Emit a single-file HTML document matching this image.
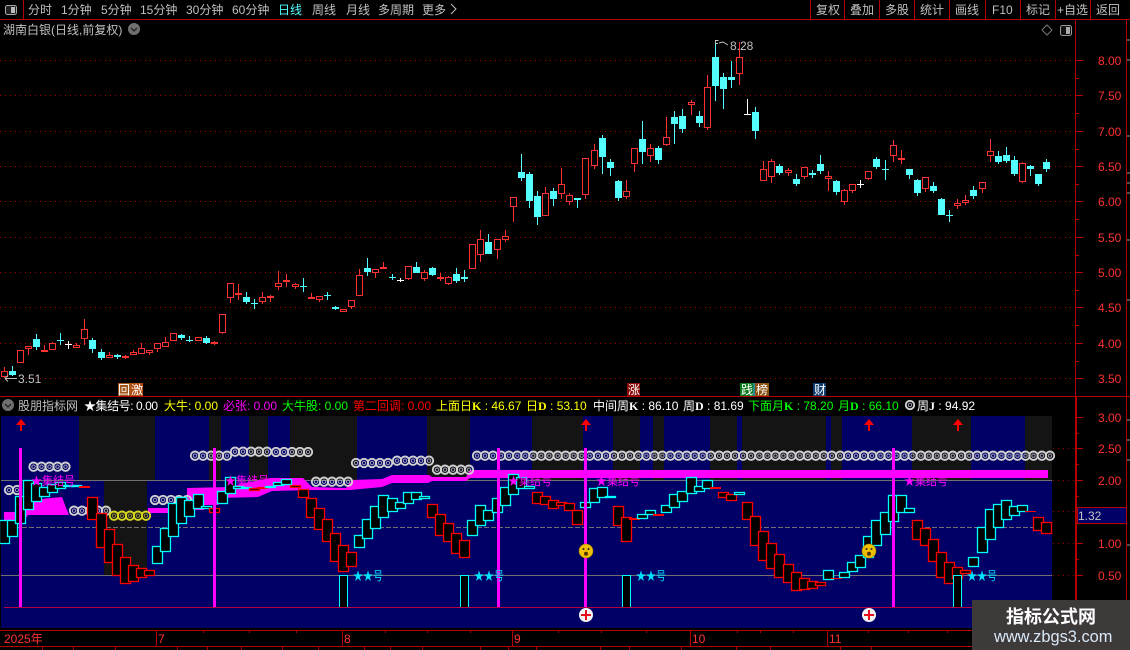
<!DOCTYPE html>
<html><head><meta charset="utf-8"><title>湖南白银</title>
<style>
html,body{margin:0;padding:0;background:#000;width:1130px;height:650px;overflow:hidden}
svg{display:block;font-family:"Liberation Sans","Noto Sans CJK SC",sans-serif;font-size:12px}
.g{fill:#c0c0c0}
.a{fill:#ff3232}
rect.c,rect.r{width:10px;fill:#000;stroke-width:1.3}
rect.c{stroke:#00ffff}
rect.r{stroke:#ff0000}
rect.f{width:11px;fill:#ff0000}
.k{font-family:"Liberation Serif",serif;font-weight:bold}
.m{fill:#ff00ff}
.s{fill:#00e5ff}
</style></head><body>
<svg width="1130" height="650" viewBox="0 0 1130 650" xmlns="http://www.w3.org/2000/svg">
<defs>
<g id="o"><circle r="4.2" fill="none" stroke="#d0d0d0" stroke-width="1.9"/><circle r="1.7" fill="none" stroke="#a0a0b8" stroke-width="1"/></g>
<g id="f"><use href="#o" x="0"/><use href="#o" x="8"/><use href="#o" x="16"/><use href="#o" x="24"/><use href="#o" x="32"/></g>
<g id="y"><circle r="4.2" fill="none" stroke="#d8d820" stroke-width="1.9"/><circle r="1.7" fill="none" stroke="#909040" stroke-width="1"/></g>
</defs>

<!-- frame lines -->
<path d="M0 19.5H1130M0 396.5H1130M0 630.5H972M0 646.5H972M23.5 0V19M1075.5 20V600M1126.5 20V600" stroke="#b40000" fill="none"/>
<path d="M810.5 0V19M844.5 0V19M879.5 0V19M914.5 0V19M949.5 0V19M985.5 0V19M1020.5 0V19M1055.5 0V19M1090.5 0V19" stroke="#b40000"/>
<path d="M1076.5 396V600" stroke="#b40000"/>

<!-- toolbar -->
<rect x="5.5" y="5.5" width="11" height="9" rx="2" fill="#222" stroke="#aaa"/><rect x="11" y="7" width="4" height="6" fill="#bbb"/>
<g class="g">
<text x="28" y="14">分时</text><text x="61" y="14">1分钟</text><text x="101" y="14">5分钟</text><text x="140" y="14">15分钟</text><text x="186" y="14">30分钟</text><text x="232" y="14">60分钟</text>
<text x="278" y="14" style="fill:#54ffff">日线</text><text x="312" y="14">周线</text><text x="346" y="14">月线</text><text x="378" y="14">多周期</text><text x="422" y="14">更多</text>
<text x="816" y="14">复权</text><text x="850" y="14">叠加</text><text x="885" y="14">多股</text><text x="920" y="14">统计</text><text x="955" y="14">画线</text><text x="992" y="14">F10</text><text x="1026" y="14">标记</text><text x="1057" y="14">+自选</text><text x="1096" y="14">返回</text>
<text x="3" y="34">湖南白银(日线,前复权)</text>
</g>
<path d="M451 4l5 5-5 5" stroke="#c0c0c0" fill="none"/>
<circle cx="134" cy="29" r="6" fill="#707070"/><path d="M131 28l3 3 3-3" stroke="#222" stroke-width="1.3" fill="none"/>
<path d="M1047 25l5 5-5 5-5-5z" stroke="#777" fill="none"/>
<rect x="1060.5" y="25.5" width="11" height="10" rx="2" fill="#111" stroke="#999"/><rect x="1066" y="27" width="4" height="7" fill="#aaa"/>

<!-- price grid -->
<path d="M0 60.5H1075M0 95.5H1075M0 131.5H1075M0 166.5H1075M0 201.5H1075M0 237.5H1075M0 272.5H1075M0 307.5H1075M0 343.5H1075M0 378.5H1075" stroke="#a00000" stroke-dasharray="1 4" fill="none"/>
<path d="M1075 60.5h8M1075 95.5h8M1075 131.5h8M1075 166.5h8M1075 201.5h8M1075 237.5h8M1075 272.5h8M1075 307.5h8M1075 343.5h8M1075 378.5h8M1075 78.5h4M1075 113.5h4M1075 149.5h4M1075 184.5h4M1075 219.5h4M1075 255.5h4M1075 290.5h4M1075 325.5h4M1075 361.5h4" stroke="#b40000"/>
<g class="a">
<text x="1098" y="65">8.00</text><text x="1098" y="100">7.50</text><text x="1098" y="136">7.00</text><text x="1098" y="171">6.50</text><text x="1098" y="206">6.00</text><text x="1098" y="242">5.50</text><text x="1098" y="277">5.00</text><text x="1098" y="312">4.50</text><text x="1098" y="348">4.00</text><text x="1098" y="383">3.50</text>
</g>

<!-- red wicks -->
<path stroke="#ff3232" fill="none" d="M4.5 367V378M28.5 349V355M44.5 345V351M52.5 342V350M76.5 343V348M84.5 319V345M109.5 352V358M125.5 355V359M133.5 350V355M141.5 343V354M149.5 353V355M157.5 349V352M165.5 337V347M214.5 341V345M222.5 333V334M230.5 298V303M238.5 284V300M262.5 292V304M270.5 295V302M278.5 271V290M286.5 274V287M295.5 283V289M311.5 293V299M319.5 300V302M351.5 307V309M359.5 269V275M375.5 273V278M383.5 262V269M408.5 279V280M424.5 270V281M440.5 273V281M448.5 276V285M480.5 230V262M497.5 250V259M505.5 230V242M513.5 207V222M545.5 187V193M561.5 168V199M569.5 193V205M585.5 195V199M594.5 144V169M626.5 180V199M634.5 164V172M650.5 144V162M666.5 117V146M691.5 100V115M707.5 75V130M739.5 42V85M763.5 161V169M771.5 159V183M788.5 168V176M804.5 177V179M828.5 171V191M844.5 189V205M852.5 191V193M868.5 179V180M893.5 140V162M901.5 150V164M925.5 189V192M957.5 199V209M965.5 195V205M982.5 189V193M990.5 139V162M1022.5 162V183"/>
<!-- red bodies -->
<path stroke="#ff3232" fill="#000" d="M1.5 371.5h6V376.5h-6zM17.5 350.5h6V362.5h-6zM25.5 346.5h6V348.5h-6zM49.5 343.5h6V349.5h-6zM73.5 345.5h6V347.5h-6zM81.5 329.5h6V338.5h-6zM106.5 355.5h6V357.5h-6zM130.5 352.5h6V354.5h-6zM138.5 348.5h6V353.5h-6zM146.5 350.5h6V352.5h-6zM154.5 343.5h6V348.5h-6zM162.5 342.5h6V346.5h-6zM170.5 333.5h6V340.5h-6zM195.5 337.5h6V340.5h-6zM219.5 314.5h6V332.5h-6zM227.5 283.5h6V297.5h-6zM259.5 297.5h6V301.5h-6zM275.5 283.5h6V286.5h-6zM292.5 284.5h6V286.5h-6zM316.5 296.5h6V299.5h-6zM340.5 309.5h6V311.5h-6zM348.5 300.5h6V306.5h-6zM356.5 275.5h6V295.5h-6zM372.5 269.5h6V272.5h-6zM405.5 266.5h6V278.5h-6zM421.5 272.5h6V278.5h-6zM445.5 277.5h6V283.5h-6zM469.5 244.5h6V268.5h-6zM477.5 239.5h6V254.5h-6zM494.5 239.5h6V249.5h-6zM502.5 236.5h6V239.5h-6zM510.5 197.5h6V206.5h-6zM542.5 193.5h6V215.5h-6zM558.5 184.5h6V193.5h-6zM566.5 195.5h6V201.5h-6zM582.5 158.5h6V194.5h-6zM591.5 150.5h6V165.5h-6zM623.5 191.5h6V196.5h-6zM631.5 148.5h6V163.5h-6zM647.5 148.5h6V155.5h-6zM663.5 137.5h6V144.5h-6zM688.5 102.5h6V104.5h-6zM704.5 87.5h6V127.5h-6zM736.5 57.5h6V73.5h-6zM760.5 169.5h6V180.5h-6zM768.5 161.5h6V176.5h-6zM785.5 170.5h6V172.5h-6zM801.5 167.5h6V176.5h-6zM825.5 176.5h6V178.5h-6zM841.5 190.5h6V201.5h-6zM849.5 184.5h6V190.5h-6zM865.5 171.5h6V178.5h-6zM890.5 145.5h6V155.5h-6zM954.5 203.5h6V205.5h-6zM962.5 200.5h6V202.5h-6zM922.5 177.5h6V188.5h-6zM979.5 182.5h6V188.5h-6zM987.5 151.5h6V155.5h-6zM1019.5 163.5h6V181.5h-6z"/>
<path fill="#ff3232" d="M41 350h7v2h-7zM122 356h7v2h-7zM211 342h7v2h-7zM235 293h7v2h-7zM267 296h7v2h-7zM283 280h7v2h-7zM308 297h7v2h-7zM380 267h7v2h-7zM437 277h7v2h-7zM898 158h7v2h-7z"/>

<!-- cyan wicks -->
<path stroke="#54ffff" fill="none" d="M12.5 366V376M36.5 334V350M60.5 333V345M92.5 338V353M101.5 349V360M117.5 354V359M181.5 334V340M189.5 336V342M206.5 336V344M246.5 292V304M254.5 299V309M303.5 278V292M327.5 292V300M335.5 306V310M367.5 258V276M392.5 274V280M416.5 262V273M432.5 267V276M456.5 268V283M464.5 270V282M488.5 234V254M521.5 154V181M529.5 172V208M537.5 191V225M553.5 188V206M577.5 198V208M602.5 135V174M610.5 159V176M618.5 180V201M642.5 121V164M658.5 146V164M674.5 111V144M682.5 109V133M699.5 111V127M715.5 40V101M723.5 73V109M731.5 61V88M755.5 107V139M779.5 164V175M796.5 174V186M812.5 170V178M820.5 155V174M836.5 180V195M876.5 157V169M885.5 160V180M909.5 169V179M917.5 179V196M933.5 182V193M941.5 198V215M949.5 210V222M973.5 186V199M998.5 151V164M1006.5 147V163M1014.5 156V176M1030.5 165V176M1038.5 174V186M1046.5 159V172"/>
<!-- cyan bodies -->
<path fill="#54ffff" d="M9 371h7v4h-7zM33 339h7v8h-7zM57 340h7v1h-7zM89 340h7v9h-7zM98 352h7v6h-7zM114 355h7v2h-7zM178 335h7v3h-7zM186 340h7v1h-7zM203 338h7v5h-7zM243 297h7v5h-7zM251 303h7v1h-7zM300 286h7v1h-7zM324 295h7v1h-7zM332 307h7v2h-7zM364 268h7v4h-7zM389 277h7v1h-7zM413 267h7v6h-7zM429 268h7v7h-7zM453 274h7v7h-7zM461 277h7v2h-7zM485 242h7v12h-7zM518 172h7v6h-7zM526 174h7v27h-7zM534 196h7v21h-7zM550 191h7v8h-7zM574 198h7v2h-7zM599 138h7v19h-7zM607 162h7v6h-7zM615 181h7v17h-7zM639 139h7v13h-7zM655 148h7v12h-7zM671 117h7v7h-7zM679 116h7v13h-7zM696 116h7v7h-7zM712 57h7v29h-7zM720 77h7v12h-7zM728 77h7v3h-7zM752 112h7v19h-7zM776 166h7v7h-7zM793 179h7v5h-7zM809 173h7v2h-7zM817 164h7v7h-7zM833 181h7v11h-7zM873 159h7v8h-7zM882 169h7v1h-7zM906 169h7v6h-7zM914 180h7v13h-7zM930 186h7v5h-7zM938 199h7v16h-7zM946 215h7v1h-7zM970 190h7v6h-7zM995 156h7v6h-7zM1003 155h7v6h-7zM1011 160h7v14h-7zM1027 166h7v3h-7zM1035 174h7v10h-7zM1043 162h7v7h-7z"/>
<!-- white dojis -->
<path stroke="#fff" fill="none" d="M68.5 341V349M65 344.5h7M400.5 278V282M397 280.5h7M747.5 99V115M744 114.5h7M860.5 180V188M857 184.5h7"/>

<!-- high / low markers -->
<path d="M715.5 40V44M715.5 40.5h3M716 43.5h2M719 43l4-1 5 3" stroke="#c0c0c0" fill="none"/>
<text x="730" y="50" class="g">8.28</text>
<path d="M5 378.5H17M5 378.5l3-3M5 378.5l3 3" stroke="#c0c0c0" fill="none"/>
<text x="18" y="383" class="g">3.51</text>

<!-- signal badges -->
<rect x="118" y="383" width="13" height="13" fill="#a0561c"/><rect x="131" y="383" width="12" height="13" fill="#b04a10"/>
<rect x="627" y="383" width="13" height="13" fill="#8a0a0a"/>
<rect x="740" y="383" width="13" height="13" fill="#0e7a1e"/><rect x="753" y="383" width="3" height="13" fill="#2a8a9a"/><rect x="755" y="383" width="14" height="13" fill="#8a5010"/>
<rect x="813" y="383" width="13" height="13" fill="#0f3c6e"/>
<g fill="#fff"><text x="118" y="394">回</text><text x="131" y="394">激</text><text x="628" y="394">涨</text><text x="741" y="394">践</text><text x="756" y="394">榜</text><text x="814" y="394">财</text></g>

<!-- legend -->
<circle cx="8" cy="405" r="6" fill="#707070"/><path d="M5 404l3 3 3-3" stroke="#222" stroke-width="1.3" fill="none"/>
<text x="18" y="410" class="g">股朋指标网</text>
<text x="84" y="410" fill="#fff" textLength="74">★集结号: 0.00</text>
<text x="164" y="410" fill="#ffff00">大牛: 0.00</text>
<text x="223" y="410" fill="#ff00ff">必张: 0.00</text>
<text x="282" y="410" fill="#00ff00">大牛股: 0.00</text>
<text x="353" y="410" fill="#ff0000">第二回调: 0.00</text>
<text x="436" y="410" fill="#ffff00">上面日<tspan class="k">K</tspan> : 46.67</text>
<text x="526" y="410" fill="#ffff00">日<tspan class="k">D</tspan> : 53.10</text>
<text x="593" y="410" fill="#fff">中间周<tspan class="k">K</tspan> : 86.10</text>
<text x="683" y="410" fill="#fff">周<tspan class="k">D</tspan> : 81.69</text>
<text x="748" y="410" fill="#00ff00">下面月<tspan class="k">K</tspan> : 78.20</text>
<text x="838" y="410" fill="#00ff00">月<tspan class="k">D</tspan> : 66.10</text>
<use href="#o" x="910" y="405"/>
<text x="917" y="410" fill="#fff">周<tspan class="k">J</tspan> : 94.92</text>

<!-- lower panel background -->
<rect x="1" y="416" width="1051" height="212" fill="#000066"/>
<path fill="#141414" d="M79 416h76v64h-76zM209 416h12v64h-12zM249 416h19v64h-19zM290 416h67v64h-67zM427 416h43v64h-43zM532 416h51v64h-51zM613 416h27v64h-27zM653 416h11v64h-11zM710 416h27v64h-27zM742 416h84v64h-84zM831 416h11v64h-11zM912 416h59v64h-59zM1025 416h27v64h-27zM104 480h43v95h-43z"/>
<path d="M1 480.5H1052M1 575.5H1052" stroke="#707070"/>
<path d="M1 527.5H1052" stroke="#707070" stroke-dasharray="5 2"/>
<path d="M4 607.5H1052" stroke="#b40040"/>

<!-- axis lower -->
<path d="M1053 448.5h22M1053 480.5h22M1053 511.5h22M1053 543.5h22M1053 575.5h22" stroke="#a00000" stroke-dasharray="1 4"/>
<path d="M1075 417.5h8M1075 448.5h8M1075 480.5h8M1075 543.5h8M1075 575.5h8M1075 433.5h4M1075 464.5h4M1075 496.5h4M1075 559.5h4" stroke="#b40000"/>
<g class="a"><text x="1098" y="422">3.00</text><text x="1098" y="453">2.50</text><text x="1098" y="485">2.00</text><text x="1098" y="548">1.00</text><text x="1098" y="580">0.50</text></g>
<rect x="1077.5" y="507.5" width="49" height="16" fill="#000066" stroke="#b40000"/>
<text x="1078" y="520" fill="#c8c8c8">1.32</text>
<path d="M1127 136h3M1127 173h3M1127 183h3M1127 193h3M1127 40h3M1127 60h3M1127 240h3M1127 300h3M1127 420h3M1127 440h3M1127 460h3M1127 545h3" stroke="#999"/>

<!-- magenta band -->
<path fill="#ff00ff" d="M4 512L24 512 24 502 30 500 62 497 65 505 69 515 28 515 24 521 4 521zM148 508h22v5h-22zM187 488L230 487 250 482 270 478 303 478 312 487 346 488 352 480 382 479 392 475 429 475 432 477 466 477 470 470 1048 470 1048 478 470 478 466 481 432 481 428 483 392 483 382 487 350 490 312 490 272 491 258 497 216 498 223 500 218 505 204 505 204 510 187 510z"/>

<!-- rings -->
<use href="#f" x="33.5" y="466.7"/><use href="#o" x="9" y="490"/><use href="#o" x="17" y="490"/>
<use href="#f" x="74" y="510.7"/>
<use href="#y" x="114" y="515.7"/><use href="#y" x="122" y="515.7"/><use href="#y" x="130" y="515.7"/><use href="#y" x="138" y="515.7"/><use href="#y" x="146" y="515.7"/>
<use href="#f" x="155" y="500"/><use href="#f" x="195" y="455.7"/><use href="#f" x="235" y="451.7"/><use href="#f" x="276" y="452"/><use href="#f" x="316" y="481.7"/><use href="#f" x="356" y="463"/><use href="#f" x="397" y="460.7"/><use href="#f" x="437" y="469.7"/>
<use href="#f" x="477" y="455.7"/><use href="#f" x="517.3" y="455.7"/><use href="#f" x="557.7" y="455.7"/><use href="#f" x="598" y="455.7"/><use href="#f" x="638.4" y="455.7"/><use href="#f" x="678.7" y="455.7"/><use href="#f" x="719.1" y="455.7"/><use href="#f" x="759.4" y="455.7"/><use href="#f" x="799.8" y="455.7"/><use href="#f" x="840.1" y="455.7"/><use href="#f" x="880.5" y="455.7"/><use href="#f" x="920.8" y="455.7"/><use href="#f" x="961.2" y="455.7"/><use href="#f" x="1001.5" y="455.7"/><use href="#o" x="1041.9" y="455.7"/><use href="#o" x="1050" y="455.7"/>

<!-- lower boxes -->
<rect class="c" x="-.5" y="520.5" height="23"/><rect class="c" x="7.5" y="520.5" height="16"/><rect class="c" x="15.5" y="496.5" height="27"/><rect class="c" x="23.5" y="480.5" height="29"/><rect class="c" x="31.5" y="483.5" height="18"/><rect class="c" x="39.5" y="487.5" height="9"/><rect class="c" x="47.5" y="484.5" height="8"/><rect class="c" x="55.5" y="482.5" height="6"/><rect class="c" x="63.5" y="485.5" height="1"/><rect class="c" x="71.5" y="485.5" height="1"/>
<rect class="f" x="79" y="486" height="2"/><rect class="r" x="87.5" y="497.5" height="22"/><rect class="r" x="96.5" y="513.5" height="34"/><rect class="r" x="104.5" y="529.5" height="33"/><rect class="r" x="112.5" y="544.5" height="31"/><rect class="r" x="120.5" y="557.5" height="26"/><rect class="r" x="128.5" y="565.5" height="16"/><rect class="r" x="136.5" y="568.5" height="9"/><rect class="r" x="144.5" y="570.5" height="5"/>
<rect class="c" x="152.5" y="546.5" height="17"/><rect class="c" x="160.5" y="528.5" height="23"/><rect class="c" x="168.5" y="503.5" height="33"/><rect class="c" x="176.5" y="497.5" height="26"/><rect class="c" x="184.5" y="500.5" height="16"/><rect class="c" x="193.5" y="494.5" height="14"/><rect class="c" x="201.5" y="506.5" height="2"/>
<rect class="r" x="209.5" y="508.5" height="4"/>
<rect class="c" x="217.5" y="491.5" height="12"/><rect class="c" x="225.5" y="477.5" height="16"/><rect class="c" x="233.5" y="486.5" height="2"/><rect class="c" x="241.5" y="487.5" height="1"/>
<rect class="r" x="249.5" y="488.5" height="2"/><rect class="f" x="257" y="487" height="2"/>
<rect class="c" x="265.5" y="486.5" height="1"/><rect class="c" x="273.5" y="482.5" height="3"/><rect class="c" x="281.5" y="479.5" height="5"/>
<rect class="r" x="290.5" y="485.5" height="2"/><rect class="r" x="298.5" y="489.5" height="8"/><rect class="r" x="306.5" y="498.5" height="19"/><rect class="r" x="314.5" y="508.5" height="21"/><rect class="r" x="322.5" y="519.5" height="22"/><rect class="r" x="330.5" y="533.5" height="28"/><rect class="r" x="338.5" y="545.5" height="26"/><rect class="r" x="346.5" y="552.5" height="14"/>
<rect class="c" x="354.5" y="535.5" height="12"/><rect class="c" x="362.5" y="519.5" height="19"/><rect class="c" x="370.5" y="506.5" height="22"/><rect class="c" x="378.5" y="495.5" height="22"/><rect class="c" x="387.5" y="498.5" height="13"/><rect class="c" x="395.5" y="502.5" height="6"/><rect class="c" x="403.5" y="492.5" height="11"/><rect class="c" x="411.5" y="492.5" height="7"/><rect class="c" x="419.5" y="496.5" height="2"/>
<rect class="r" x="427.5" y="504.5" height="13"/><rect class="r" x="435.5" y="514.5" height="21"/><rect class="r" x="443.5" y="523.5" height="18"/><rect class="r" x="451.5" y="533.5" height="20"/><rect class="r" x="459.5" y="540.5" height="17"/>
<rect class="c" x="467.5" y="520.5" height="15"/><rect class="c" x="475.5" y="505.5" height="20"/><rect class="c" x="483.5" y="510.5" height="10"/><rect class="c" x="492.5" y="498.5" height="14"/><rect class="c" x="500.5" y="487.5" height="18"/><rect class="c" x="508.5" y="474.5" height="20"/><rect class="c" x="516.5" y="477.5" height="11"/><rect class="c" x="524.5" y="486.5" height="2"/>
<rect class="r" x="532.5" y="492.5" height="11"/><rect class="r" x="540.5" y="496.5" height="8"/><rect class="r" x="548.5" y="500.5" height="8"/><rect class="r" x="556.5" y="502.5" height="3"/><rect class="r" x="564.5" y="503.5" height="7"/><rect class="r" x="572.5" y="510.5" height="14"/>
<rect class="c" x="580.5" y="502.5" height="5"/><rect class="c" x="589.5" y="488.5" height="14"/><rect class="c" x="597.5" y="487.5" height="10"/><rect class="c" x="605.5" y="496.5" height="1"/>
<rect class="r" x="613.5" y="506.5" height="19"/><rect class="r" x="621.5" y="517.5" height="24"/><rect class="f" x="629" y="518" height="2"/>
<rect class="c" x="637.5" y="514.5" height="4"/><rect class="c" x="645.5" y="510.5" height="4"/><rect class="f" x="653" y="514" height="2"/>
<rect class="c" x="661.5" y="505.5" height="7"/><rect class="c" x="669.5" y="494.5" height="13"/><rect class="c" x="677.5" y="491.5" height="10"/><rect class="c" x="686.5" y="477.5" height="16"/><rect class="c" x="694.5" y="486.5" height="5"/><rect class="c" x="702.5" y="480.5" height="8"/>
<rect class="f" x="710" y="487" height="2"/><rect class="r" x="718.5" y="492.5" height="5"/><rect class="r" x="726.5" y="494.5" height="6"/>
<rect class="c" x="734.5" y="492.5" height="2"/>
<rect class="r" x="742.5" y="502.5" height="17"/><rect class="r" x="750.5" y="516.5" height="29"/><rect class="r" x="758.5" y="531.5" height="29"/><rect class="r" x="766.5" y="543.5" height="25"/><rect class="r" x="774.5" y="554.5" height="23"/><rect class="r" x="783.5" y="564.5" height="18"/><rect class="r" x="791.5" y="572.5" height="18"/><rect class="r" x="799.5" y="578.5" height="11"/><rect class="r" x="807.5" y="581.5" height="7"/><rect class="r" x="815.5" y="582.5" height="3"/>
<rect class="c" x="823.5" y="570.5" height="9"/><rect class="f" x="831" y="578" height="1"/>
<rect class="c" x="839.5" y="572.5" height="5"/><rect class="c" x="847.5" y="562.5" height="9"/><rect class="c" x="855.5" y="555.5" height="12"/><rect class="c" x="863.5" y="536.5" height="21"/><rect class="c" x="871.5" y="520.5" height="25"/><rect class="c" x="880.5" y="512.5" height="22"/><rect class="c" x="888.5" y="495.5" height="26"/><rect class="c" x="896.5" y="495.5" height="17"/><rect class="c" x="904.5" y="508.5" height="4"/>
<rect class="r" x="912.5" y="520.5" height="19"/><rect class="r" x="920.5" y="528.5" height="17"/><rect class="r" x="928.5" y="539.5" height="22"/><rect class="r" x="936.5" y="552.5" height="25"/><rect class="r" x="944.5" y="562.5" height="21"/><rect class="r" x="952.5" y="567.5" height="11"/><rect class="r" x="960.5" y="570.5" height="3"/>
<rect class="c" x="968.5" y="557.5" height="9"/><rect class="c" x="977.5" y="527.5" height="25"/><rect class="c" x="985.5" y="509.5" height="30"/><rect class="c" x="993.5" y="504.5" height="23"/><rect class="c" x="1001.5" y="500.5" height="19"/><rect class="c" x="1009.5" y="506.5" height="9"/><rect class="c" x="1017.5" y="505.5" height="6"/>
<rect class="f" x="1025" y="511" height="1"/><rect class="r" x="1033.5" y="517.5" height="13"/><rect class="r" x="1041.5" y="522.5" height="11"/>

<!-- tall bars -->
<g fill="#000" stroke="#00ffff"><path d="M339.5 607V575.5h8V607"/><path d="M460.5 607V575.5h8V607"/><path d="M622.5 607V575.5h8V607"/><path d="M953.5 607V575.5h8V607"/></g>

<!-- vertical magenta -->
<path fill="#ff00ff" d="M19 448h3v159h-3zM213 448h3v159h-3zM497 448h3v159h-3zM584 448h3v159h-3zM892 448h3v159h-3z"/>

<!-- arrows -->
<path fill="#ff0000" d="M21 419l5 6h-4v6h-2v-6h-4zM586 419l5 6h-4v6h-2v-6h-4zM869 419l5 6h-4v6h-2v-6h-4zM958 419l5 6h-4v6h-2v-6h-4z"/>

<!-- labels -->
<g class="m"><text x="31" y="485" textLength="44" lengthAdjust="spacingAndGlyphs">★集结号</text><text x="225" y="485" textLength="44" lengthAdjust="spacingAndGlyphs">★集结号</text><text x="508" y="485" textLength="44" lengthAdjust="spacingAndGlyphs">★集结号</text><text x="596" y="485" textLength="44" lengthAdjust="spacingAndGlyphs">★集结号</text><text x="904" y="485" textLength="44" lengthAdjust="spacingAndGlyphs">★集结号</text></g>
<g class="s"><text x="353" y="580" textLength="30" lengthAdjust="spacingAndGlyphs">★★号</text><text x="474" y="580" textLength="30" lengthAdjust="spacingAndGlyphs">★★号</text><text x="636" y="580" textLength="30" lengthAdjust="spacingAndGlyphs">★★号</text><text x="967" y="580" textLength="30" lengthAdjust="spacingAndGlyphs">★★号</text></g>

<!-- smileys -->
<g id="sm"><circle cx="586" cy="551" r="7" fill="#eec000" stroke="#a08000" stroke-width=".6"/><circle cx="583.5" cy="549" r="1" fill="#222"/><circle cx="588.5" cy="549" r="1" fill="#222"/><ellipse cx="586" cy="553.8" rx="2" ry="2" fill="#553300"/></g>
<use href="#sm" x="283" y="0"/>
<!-- plus -->
<g id="pl"><circle cx="586" cy="615" r="7" fill="#f4f4f4"/><path d="M581 614h4v-4h2v4h4v2h-4v4h-2v-4h-4z" fill="#e8101a"/></g>
<use href="#pl" x="283" y="0"/>

<!-- time axis -->
<path d="M156.5 630V646M342.5 630V646M512.5 630V646M690.5 630V646M827.5 630V646" stroke="#b40000"/>
<path d="M203.5 630v3M249.5 630v3M296.5 630v3M385.5 630v3M427.5 630v3M470.5 630v3M558.5 630v3M601.5 630v3M646.5 630v3M737.5 630v3M760.5 630v3M793.5 630v3M868.5 630v3M908.5 630v3M947.5 630v3M42.5 646v4M73.5 646v4M115.5 646v4M177.5 646v4M207.5 646v4M241.5 646v4M282.5 646v4M318.5 646v4M364.5 646v4M390.5 646v4M422.5 646v4M480.5 646v4M508.5 646v4M536.5 646v4M600.5 646v4M629.5 646v4M681.5 646v4M736.5 646v4M770.5 646v4M840.5 646v4M871.5 646v4" stroke="#b40000"/>
<g class="a"><text x="4" y="643">2025年</text><text x="158" y="643">7</text><text x="344" y="643">8</text><text x="514" y="643">9</text><text x="692" y="643">10</text><text x="829" y="643">11</text></g>

<!-- watermark -->
<rect x="972" y="600" width="158" height="50" fill="#3e3a3a"/>
<text x="1006" y="623" fill="#fff" style="font-size:18px;font-weight:bold">指标公式网</text>
<text x="994" y="642" fill="#d8e8f8" style="font-size:16.4px">www.zbgs3.com</text>
</svg>
</body></html>
